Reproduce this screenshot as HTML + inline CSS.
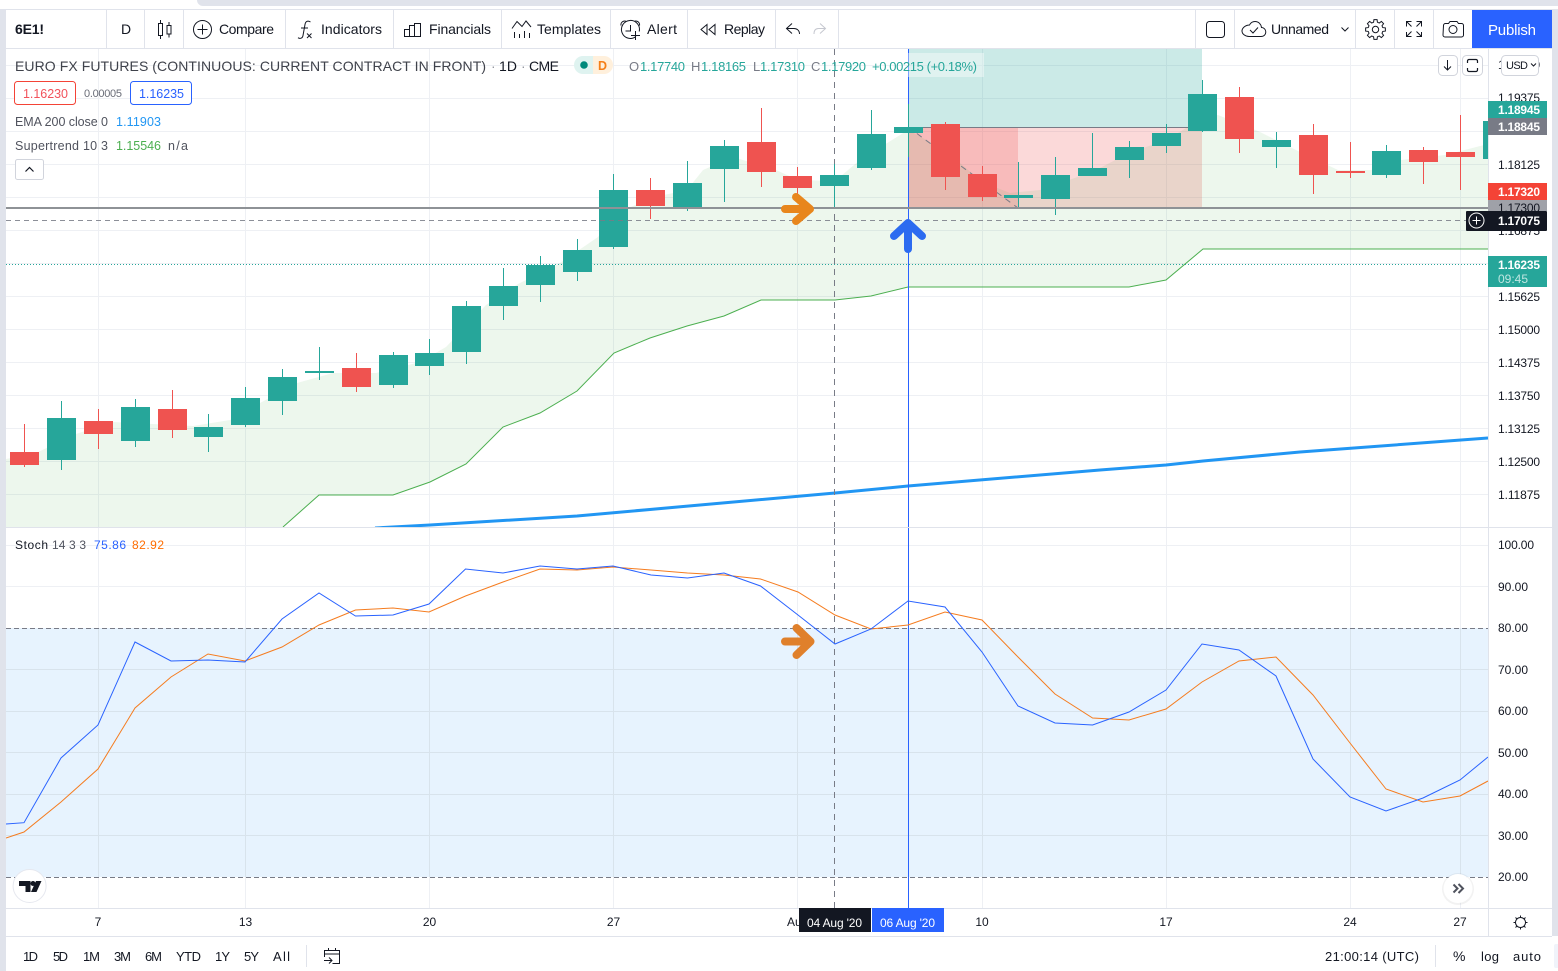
<!DOCTYPE html>
<html lang="en"><head><meta charset="utf-8"><title>6E1! Chart</title>
<style>
html,body{margin:0;padding:0;background:#fff;width:1558px;height:971px;overflow:hidden}
svg{display:block;font-family:"Liberation Sans",sans-serif}
text{white-space:pre}
.tb{font-size:14px;fill:#131722}
.leg{font-size:12.5px;fill:#50535e}
.ax{font-size:12px;fill:#131722}
.bd{font-size:12px;fill:#fff}
.ic{fill:none;stroke:#131722;stroke-width:1}
.bt{font-size:13px;fill:#131722}
</style></head><body>
<svg width="1558" height="971" viewBox="0 0 1558 971" xmlns="http://www.w3.org/2000/svg">
<defs>
<clipPath id="cm"><rect x="6" y="49" width="1482" height="478"/></clipPath>
<clipPath id="cs"><rect x="6" y="528" width="1482" height="380"/></clipPath>
</defs>
<rect width="1558" height="971" fill="#fff"/>
<!-- frame -->
<path d="M197 0H1558V6H203a6 6 0 0 1-6-6z" fill="#e0e3eb"/>
<rect x="0" y="9" width="1558" height="1" fill="#e0e3eb"/>
<rect x="0" y="10" width="6" height="961" fill="#e0e3eb"/>
<rect x="1552" y="10" width="6" height="926" fill="#e0e3eb"/>
<rect x="6" y="48" width="1546" height="1" fill="#e0e3eb"/>

<!-- main pane -->
<g clip-path="url(#cm)">
<path d="M6 65.5H1488M6 98.5H1488M6 131.5H1488M6 164.5H1488M6 197.5H1488M6 230.5H1488M6 263.5H1488M6 296.5H1488M6 329.5H1488M6 362.5H1488M6 395.5H1488M6 428.5H1488M6 461.5H1488M6 494.5H1488M98.5 49V527M245.5 49V527M429.5 49V527M613.5 49V527M797.5 49V527M982.5 49V527M1166.5 49V527M1350.5 49V527M1460.5 49V527" stroke="#eef0f4" stroke-width="1" fill="none"/>
<rect x="908" y="49" width="294" height="78" fill="#26a69a" fill-opacity=".24"/>
<rect x="908" y="127" width="294" height="81" fill="#ef5350" fill-opacity=".22"/>
<rect x="908" y="127" width="110" height="81" fill="#ef5350" fill-opacity=".22"/>
<path d="M6 459L36 453 76 434 113 422 193 426 230 420 260 403 297 383 333 373 376 373 420 362 446 347 486 305 518 284 560 263 598 237 614 215 650 198 687 190 703 170 733 157 776 170 798 180 835 181 860 160 908 130 945 150 982 182 1010 193 1040 190 1092 172 1129 153 1166 140 1203 118 1218 115 1258 131 1298 151 1338 170 1371 170 1401 160 1445 155 1488 144V249H1203L1166 280 1129 287H908L871 296 835 300H761L724 316 687 326 650 338 614 353 577 391 540 413 503 427 466 464 430 482 393 495H319L283 527H6Z" fill="#4caf50" fill-opacity=".1"/>
<path d="M908 127.5H1202" stroke="#787b86" stroke-width="1"/>
<path d="M908 127L1018 208" stroke="#787b86" stroke-width="1" stroke-dasharray="6 5"/>
<polyline points="283,527 319,495 393,495 430,482 466,464 503,427 540,413 577,391 614,353 650,338 687,326 724,316 761,300 835,300 871,296 908,287 1129,287 1166,280 1203,249 1488,249" fill="none" stroke="#4caf50" stroke-width="1"/>
<polyline points="375,528 430,525 577,516 700,505 835,493 908,486 1100,470 1166,465 1203,461 1300,452 1488,438" fill="none" stroke="#2196f3" stroke-width="3"/>
<path d="M908.5 49V527" stroke="#2962ff" stroke-width="1"/>
<path d="M834.5 49V527" stroke="#787b86" stroke-width="1" stroke-dasharray="6 5"/>
<!-- wicks -->
<path d="M24.5 424V467M98.5 409V449M172.5 390V438M356.5 353V392M650.5 178V219M761.5 108V187M797.5 167V202M945.5 122V190M982.5 166V201M1239.5 87V153M1313.5 124V194M1350.5 142V178M1423.5 147V184M1460.5 115V190" stroke="#ef5350" stroke-width="1" fill="none"/>
<path d="M61.5 401V470M135.5 399V447M208.5 414V452M245.5 387V427M282.5 369V415M319.5 347V380M393.5 352V388M429.5 339V375M466.5 301V364M503.5 268V320M540.5 256V302M577.5 239V281M613.5 174V249M687.5 161V211M724.5 140V202M834.5 164V207M871.5 110V170M908.5 104V157M1018.5 162V208M1055.5 157V215M1092.5 133V176M1129.5 141V178M1166.5 124V153M1202.5 80V132M1276.5 132V168M1386.5 145V178" stroke="#26a69a" stroke-width="1" fill="none"/>
<!-- bodies -->
<path d="M10 452h29v13h-29zM84 421h29v13h-29zM158 409h29v21h-29zM342 368h29v19h-29zM636 190h29v16h-29zM747 142h29v30h-29zM783 176h29v12h-29zM931 124h29v53h-29zM968 174h29v23h-29zM1225 97h29v42h-29zM1299 135h29v40h-29zM1336 171h29v2h-29zM1409 150h29v12h-29zM1446 152h29v5h-29z" fill="#ef5350"/>
<path d="M47 418h29v42h-29zM121 407h29v34h-29zM194 427h29v10h-29zM231 398h29v27h-29zM268 377h29v24h-29zM305 371h29v2h-29zM379 355h29v30h-29zM415 353h29v13h-29zM452 306h29v46h-29zM489 286h29v20h-29zM526 265h29v20h-29zM563 250h29v22h-29zM599 190h29v57h-29zM673 183h29v25h-29zM710 146h29v23h-29zM820 175h29v11h-29zM857 134h29v34h-29zM894 127h29v6h-29zM1004 195h29v3h-29zM1041 175h29v24h-29zM1078 168h29v8h-29zM1115 147h29v13h-29zM1152 133h29v13h-29zM1188 94h29v37h-29zM1262 140h29v7h-29zM1372 151h29v24h-29zM1483 121h29v38h-29z" fill="#26a69a"/>
<path d="M6 208H1488" stroke="#8e9296" stroke-width="2"/>
<path d="M6 220.5H1488" stroke="#787b86" stroke-opacity=".85" stroke-width="1" stroke-dasharray="5 4"/>
<path d="M6 264.5H1488" stroke="#26a69a" stroke-width="1" stroke-dasharray="1 2"/>
<path d="M796 197L810 209 796 221M785 209H806" fill="none" stroke="#e8861c" stroke-width="8" stroke-linecap="round" stroke-linejoin="round"/>
<path d="M894 236L908 223 922 236M908 228V249" fill="none" stroke="#2c6bf0" stroke-width="8" stroke-linecap="round" stroke-linejoin="round"/>
</g>

<!-- legend -->
<rect x="908" y="53" width="76" height="24" fill="#fff" fill-opacity=".4"/>
<text x="15" y="71" font-size="14" fill="#3f424b" textLength="471">EURO FX FUTURES (CONTINUOUS: CURRENT CONTRACT IN FRONT)</text>
<text x="491" y="71" font-size="14" fill="#9598a1">·</text>
<text x="499" y="71" font-size="14" fill="#131722" textLength="18">1D</text>
<text x="521" y="71" font-size="14" fill="#9598a1">·</text>
<text x="529" y="71" font-size="14" fill="#131722" textLength="30">CME</text>
<path d="M593 56h-10a9 9 0 0 0 0 18h10z" fill="#dff3f0"/>
<path d="M593 56h11a9 9 0 0 1 0 18h-11z" fill="#fff0dc"/>
<circle cx="584" cy="65" r="3.8" fill="#00897b"/>
<text x="598" y="70" font-size="12.5" font-weight="bold" fill="#f57f17">D</text>
<g font-size="13">
<text x="629" y="71" fill="#787b86">O</text><text x="640" y="71" fill="#26a69a" textLength="45">1.17740</text>
<text x="691" y="71" fill="#787b86">H</text><text x="701" y="71" fill="#26a69a" textLength="45">1.18165</text>
<text x="753" y="71" fill="#787b86">L</text><text x="760" y="71" fill="#26a69a" textLength="45">1.17310</text>
<text x="811" y="71" fill="#787b86">C</text><text x="821" y="71" fill="#26a69a" textLength="45">1.17920</text>
<text x="872" y="71" fill="#26a69a" textLength="105">+0.00215 (+0.18%)</text>
</g>
<rect x="14.5" y="81.5" width="61" height="23" rx="3" fill="#fff" stroke="#f44336"/>
<text x="23" y="98" class="leg" style="fill:#f2525b" textLength="45">1.16230</text>
<text x="84" y="97" font-size="11" fill="#6a6d78" textLength="38">0.00005</text>
<rect x="130.5" y="81.5" width="61" height="23" rx="3" fill="#fff" stroke="#2962ff"/>
<text x="139" y="98" class="leg" style="fill:#2962ff" textLength="45">1.16235</text>
<text x="15" y="126" class="leg" textLength="93">EMA 200 close 0</text>
<text x="116" y="126" class="leg" style="fill:#2196f3" textLength="45">1.11903</text>
<text x="15" y="150" class="leg" textLength="93">Supertrend 10 3</text>
<text x="116" y="150" class="leg" style="fill:#4caf50" textLength="45">1.15546</text>
<text x="168" y="150" class="leg" textLength="20">n/a</text>
<rect x="15.5" y="159.5" width="28" height="20" rx="2" fill="#fff" stroke="#d1d4dc"/>
<path d="M25.5 171.5l4-4 4 4" fill="none" stroke="#131722" stroke-width="1.2"/>

<!-- divider / axes -->
<rect x="6" y="527" width="1546" height="1" fill="#e0e3eb"/>
<rect x="1488" y="49" width="1" height="887" fill="#e0e3eb"/>
<rect x="6" y="908" width="1546" height="1" fill="#e0e3eb"/>
<rect x="6" y="936" width="1546" height="1" fill="#e0e3eb"/>

<!-- stoch pane -->
<g clip-path="url(#cs)">
<path d="M6 545.5H1488M6 586.5H1488M98.5 528V628M245.5 528V628M429.5 528V628M613.5 528V628M797.5 528V628M982.5 528V628M1166.5 528V628M1350.5 528V628M1460.5 528V628M98.5 877V908M245.5 877V908M429.5 877V908M613.5 877V908M797.5 877V908M982.5 877V908M1166.5 877V908M1350.5 877V908M1460.5 877V908" stroke="#eef0f4" stroke-width="1" fill="none"/>
<rect x="6" y="628" width="1482" height="249" fill="#2196f3" fill-opacity=".11"/>
<path d="M6 669.5H1488M6 711.5H1488M6 752.5H1488M6 794.5H1488M6 835.5H1488M98.5 628V877M245.5 628V877M429.5 628V877M613.5 628V877M797.5 628V877M982.5 628V877M1166.5 628V877M1350.5 628V877M1460.5 628V877" stroke="#d8e3ec" stroke-width="1" fill="none"/>
<path d="M6 628.5H1488M6 877.5H1488" stroke="#787b86" stroke-width="1" stroke-dasharray="5 3"/>
<path d="M908.5 528V908" stroke="#2962ff" stroke-width="1"/>
<path d="M834.5 528V908" stroke="#787b86" stroke-width="1" stroke-dasharray="6 5"/>
<polyline points="6,838 24,832 61,802 98,769 135,708 171,677 208,654 245,661 282,647 319,625 355.5,610 393,608 429,612 465.5,596 503,582 540,569 577,570 613,567 651,570 687.5,573 724,575 760.5,579 798,592 835,615 871,629 908,625 945,612 982,620 1018,657 1055,694 1092.6,718 1129,720 1166,709 1202,682 1239,661 1276,657 1313,695 1350,743 1386,789 1423,802 1460,796 1488,781" fill="none" stroke="#f57c1f" stroke-width="1"/>
<polyline points="6,824 24,822.7 61,758 98,725 135,642 171,661 208,660 245,662 282,619 319,593 355.5,616 393,615 429,604 465.5,569 503,573 540,566 577,569 613,566 651,575 687.5,578 724,573 760.5,586 798,615 835,644 871,629 908,601 945,607 982,652 1018,706 1055,723 1092.6,725 1129,712 1166,690 1202,644 1239,650 1276,676 1313,759 1350,797 1386,811 1423,798 1460,780 1488,757" fill="none" stroke="#2962ff" stroke-width="1"/>
<path d="M796.5 628L810.5 641.5 796.5 655M785 641.5H806" fill="none" stroke="#e0802b" stroke-width="8" stroke-linecap="round" stroke-linejoin="round"/>
</g>
<text x="15" y="549" font-size="12" fill="#131722" textLength="33">Stoch</text>
<text x="52" y="549" font-size="12" fill="#50535e" textLength="34">14 3 3</text>
<text x="94" y="549" font-size="12" fill="#2962ff" textLength="32">75.86</text>
<text x="132" y="549" font-size="12" fill="#ff6d00" textLength="32">82.92</text>

<!-- price labels -->
<g class="ax">
<text x="1498" y="69" textLength="42">1.20000</text>
<text x="1498" y="102" textLength="42">1.19375</text>
<text x="1498" y="135" textLength="42">1.18750</text>
<text x="1498" y="169" textLength="42">1.18125</text>
<text x="1498" y="235" textLength="42">1.16875</text>
<text x="1498" y="301" textLength="42">1.15625</text>
<text x="1498" y="334" textLength="42">1.15000</text>
<text x="1498" y="367" textLength="42">1.14375</text>
<text x="1498" y="400" textLength="42">1.13750</text>
<text x="1498" y="433" textLength="42">1.13125</text>
<text x="1498" y="466" textLength="42">1.12500</text>
<text x="1498" y="499" textLength="42">1.11875</text>
<text x="1498" y="549" textLength="36">100.00</text>
<text x="1498" y="591" textLength="30">90.00</text>
<text x="1498" y="632" textLength="30">80.00</text>
<text x="1498" y="674" textLength="30">70.00</text>
<text x="1498" y="715" textLength="30">60.00</text>
<text x="1498" y="757" textLength="30">50.00</text>
<text x="1498" y="798" textLength="30">40.00</text>
<text x="1498" y="840" textLength="30">30.00</text>
<text x="1498" y="881" textLength="30">20.00</text>
</g>
<!-- badges -->
<rect x="1488" y="101" width="59" height="17" fill="#26a69a"/>
<text x="1498" y="114" class="bd" font-weight="bold" textLength="42">1.18945</text>
<rect x="1488" y="118" width="59" height="17" fill="#787b86"/>
<text x="1498" y="131" class="bd" font-weight="bold" textLength="42">1.18845</text>
<rect x="1488" y="183" width="59" height="17" fill="#f44336"/>
<text x="1498" y="196" class="bd" font-weight="bold" textLength="42">1.17320</text>
<rect x="1488" y="200" width="59" height="11" fill="#9fa1a8"/>
<text x="1498" y="212" class="ax" textLength="42">1.17300</text>
<rect x="1466" y="211" width="81" height="20" rx="1" fill="#131722"/>
<circle cx="1476.5" cy="220.5" r="7.5" fill="none" stroke="#fff"/>
<path d="M1476.5 216.5v8M1472.5 220.5h8" stroke="#fff"/>
<text x="1498" y="225" class="bd" font-weight="bold" textLength="42">1.17075</text>
<rect x="1488" y="256" width="59" height="31" fill="#26a69a"/>
<text x="1498" y="269" class="bd" font-weight="bold" textLength="42">1.16235</text>
<text x="1498" y="283" font-size="12" fill="#bfe6e1" textLength="30">09:45</text>

<!-- top-right chart buttons -->
<rect x="1438.5" y="55.5" width="19" height="20" rx="4" fill="#fff" stroke="#d1d4dc"/>
<path d="M1447.5 60v10M1444 66.5l3.5 3.5 3.5-3.5" fill="none" stroke="#131722"/>
<rect x="1462.5" y="55.5" width="20" height="20" rx="4" fill="#fff" stroke="#d1d4dc"/>
<path d="M1467.5 63v-2a1.5 1.5 0 0 1 1.5-1.5h7a1.5 1.5 0 0 1 1.5 1.5v2M1467.5 68v2a1.5 1.5 0 0 0 1.5 1.5h7a1.5 1.5 0 0 0 1.5-1.5v-2" fill="none" stroke="#131722" stroke-width="1.2"/>
<rect x="1501.5" y="55.5" width="37" height="20" rx="4" fill="#fff" stroke="#d1d4dc"/>
<text x="1506" y="69" font-size="11" fill="#131722" textLength="22">USD</text>
<path d="M1531 63.5l2.5 2.5 2.5-2.5" fill="none" stroke="#131722"/>

<!-- time axis -->
<g class="ax" text-anchor="middle">
<text x="98" y="926">7</text><text x="245.5" y="926">13</text><text x="429.5" y="926">20</text><text x="613.5" y="926">27</text>
<text x="982" y="926">10</text><text x="1166" y="926">17</text><text x="1350" y="926">24</text><text x="1460" y="926">27</text>
</g>
<text x="787" y="926" class="ax">Aug</text>
<rect x="799" y="908" width="72" height="24" fill="#131722"/>
<text x="807" y="927" class="bd" textLength="55">04 Aug '20</text>
<rect x="872" y="908" width="72" height="24" fill="#2962ff"/>
<text x="880" y="927" class="bd" textLength="55">06 Aug '20</text>
<g fill="none" stroke="#131722">
<circle cx="1520.5" cy="922.5" r="5"/>
<path d="M1520.5 915.5v2M1520.5 927.5v2M1513.5 922.5h2M1525.5 922.5h2M1515.5 917.5l1.5 1.5M1524 926l1.5 1.5M1525.5 917.5l-1.5 1.5M1517 926l-1.5 1.5"/>
</g>

<!-- logo & go-to -->
<circle cx="29.6" cy="886" r="16.5" fill="#fff" stroke="#e6e8ef"/>
<path d="M19 881h11.5v11h-5v-6H19zM36 881h5.5l-5 11h-5.5z" fill="#131722"/>
<circle cx="33" cy="883.5" r="2.5" fill="#131722"/>
<circle cx="1458" cy="889" r="16" fill="#000" fill-opacity=".05"/>
<circle cx="1458" cy="888.5" r="14.5" fill="#fff"/>
<path d="M1453.5 884.5l4 4-4 4M1458.5 884l4.500 4.500-4.500 4.500" fill="none" stroke="#50535e" stroke-width="2"/>

<!-- top toolbar -->
<rect x="6" y="10" width="1546" height="38" fill="#fff"/>
<rect x="6" y="48" width="1546" height="1" fill="#e0e3eb"/>
<path d="M106.5 10V48M144.5 10V48M183.5 10V48M285.5 10V48M393.5 10V48M501.5 10V48M610.5 10V48M687.5 10V48M775.5 10V48M838.5 10V48M1195.5 10V48M1234.5 10V48M1355.5 10V48M1394.5 10V48M1433.5 10V48" stroke="#e0e3eb" stroke-width="1"/>
<text x="15" y="34" font-size="14" font-weight="bold" fill="#131722" textLength="29">6E1!</text>
<text x="121" y="34" class="tb" font-size="13">D</text>
<g class="ic">
<path d="M160.5 20v3.5M160.5 35.5v3.5M158.5 23.5h4v12h-4zM169 22v3.5M169 34v3.5M167 25.5h4v8.5h-4z"/>
<circle cx="202.5" cy="29.5" r="9"/>
<path d="M202.5 24.5v10M197.5 29.5h10"/>
<path d="M310.5 22c-3-1.800-5-.5-5.500 2.500l-2 11c-.5 3-3 3.500-5 2.200M301 28h7M307 33.500l4.500 4.500M311.500 33.500l-4.500 4.500"/>
<path d="M404.5 36.5v-7h5v7M409.5 36.5v-11h5v11M414.5 36.5V23.5h6v13M404 36.5h17"/>
<path d="M512 28.5l5-7 5 5 4-5.500 5 6M514.5 38v-6M519.5 38v-4M524.5 38v-7M529.5 38v-5"/>
<path d="M636 36.5a9 9 0 1 1 3.200-5M630.5 25v6h-5M621 25.5a3.800 3.800 0 0 1 5-4.300M634.5 21.200a3.800 3.800 0 0 1 5 4.300M631 35.5h9M635.5 31v9"/>
<path d="M707 24.5l-6 5 6 5zM715 24.5l-6 5 6 5z"/>
<path d="M792 23.5l-5.500 5 5.500 5M787 28.5h7c3 0 5.500 2 5.500 5.500"/>
<rect x="1206.5" y="21.5" width="18" height="16" rx="3"/>
<path d="M1249 36.5h12c3 0 4.800-2 4.800-4.500s-2-4.500-4.300-4.500c-.5-3.500-3-6-6.500-6-2.500 0-4.500 1.500-5.500 3.500-4 0-7.500 3-7.500 6 0 3 3.500 5.500 7 5.500zM1250 30l3 3 5-5.500"/>
<path d="M1341.5 27.5l3.5 3.5 3.5-3.5"/>
<g transform="translate(1375.5 29.5)">
<circle r="3.2"/>
<path id="gt" d="M6.93-2.87L7.24-1.94 9.88-1.56V1.56L7.24 1.94 6.93 2.87"/>
<use href="#gt" transform="rotate(45)"/><use href="#gt" transform="rotate(90)"/><use href="#gt" transform="rotate(135)"/><use href="#gt" transform="rotate(180)"/><use href="#gt" transform="rotate(225)"/><use href="#gt" transform="rotate(270)"/><use href="#gt" transform="rotate(315)"/>
</g>
<path d="M1406.5 26.5v-5h5M1416.5 21.5h5v5M1421.5 32v4.5h-5M1411.5 36.5h-5V32M1407 22l4.5 4.5M1421 22l-4.5 4.5M1421 36l-4.5-4.500M1407 36l4.500-4.500"/>
<path d="M1443.5 25.5a2 2 0 0 1 2-2h3l1.5-2h7l1.5 2h3a2 2 0 0 1 2 2v9.500a2 2 0 0 1-2 2h-16.500a2 2 0 0 1-2-2z"/>
<circle cx="1453" cy="29.5" r="4"/>
</g>
<path d="M820 23.5l5.5 5-5.500 5M825.500 28.500h-7c-3 0-4.500 2-4.500 5.500" fill="none" stroke="#c5c7cf"/>
<g class="tb">
<text x="219" y="34" textLength="55">Compare</text>
<text x="321" y="34" textLength="61">Indicators</text>
<text x="429" y="34" textLength="62">Financials</text>
<text x="537" y="34" textLength="64">Templates</text>
<text x="647" y="34" textLength="30">Alert</text>
<text x="724" y="34" textLength="41">Replay</text>
<text x="1271" y="34" textLength="58">Unnamed</text>
</g>
<rect x="1472" y="10" width="80" height="38" fill="#2962ff"/>
<text x="1488" y="35" font-size="15" fill="#fff" textLength="48">Publish</text>

<!-- bottom bar -->
<g class="bt">
<text x="23" y="961" textLength="15">1D</text>
<text x="53" y="961" textLength="15">5D</text>
<text x="83" y="961" textLength="17">1M</text>
<text x="114" y="961" textLength="17">3M</text>
<text x="145" y="961" textLength="17">6M</text>
<text x="176" y="961" textLength="25">YTD</text>
<text x="215" y="961" textLength="15">1Y</text>
<text x="244" y="961" textLength="15">5Y</text>
<text x="273" y="961" textLength="17">All</text>
<text x="1325" y="961" textLength="94">21:00:14 (UTC)</text>
<text x="1453" y="961" font-size="14" textLength="13">%</text>
<text x="1481" y="961" textLength="18">log</text>
<text x="1513" y="961" textLength="28">auto</text>
</g>
<path d="M306.5 945v22M1435.5 945v22" stroke="#e0e3eb"/>
<path d="M324.5 957v-6.5h15v13h-7M324.5 954h15M328.5 948v3M335.5 948v3M324 960.500h8M329 957.500l3 3-3 3" fill="none" stroke="#131722"/>
<path d="M1558 944h-2a2 2 0 0 0-2 2v20a2 2 0 0 0 2 2h2z" fill="#f0f3fa"/>
</svg>
</body></html>
